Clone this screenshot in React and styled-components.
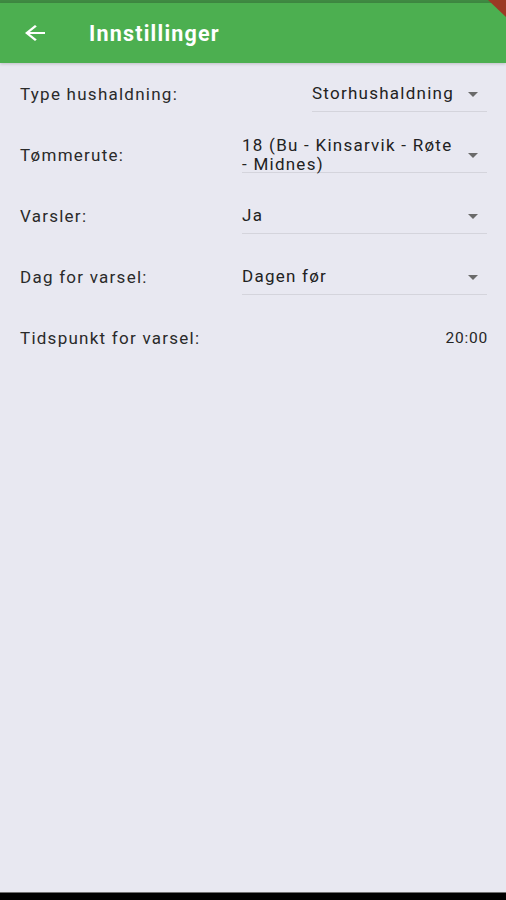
import React, { useState } from 'react';
import styled, { createGlobalStyle } from 'styled-components';

const GlobalStyle = createGlobalStyle`
  html, body {
    margin: 0;
    padding: 0;
    background: #e8e8f1;
  }
  * {
    box-sizing: border-box;
  }
`;

const Screen = styled.div`
  width: 506px;
  height: 900px;
  display: flex;
  flex-direction: column;
  background: #e8e8f1;
  font-family: Roboto, "Noto Sans", sans-serif;
  position: relative;
  overflow: hidden;
`;

const StatusBar = styled.div`
  height: 3px;
  background: #3f8a42;
`;

const AppBar = styled.div`
  height: 60px;
  background: #4caf50;
  display: flex;
  align-items: center;
  padding-left: 20px;
  box-shadow: 0 1px 3px rgba(0, 0, 0, 0.18);
  z-index: 1;
`;

const BackButton = styled.button`
  border: none;
  background: none;
  padding: 0;
  display: flex;
  align-items: center;
  justify-content: center;
  cursor: pointer;
`;

const Title = styled.h1`
  margin: 0 0 0 39px;
  color: #ffffff;
  font-size: 21.5px;
  font-weight: 700;
  letter-spacing: 1.2px;
`;

/* debug banner corner peeking in at the top right */
const DebugCorner = styled.svg`
  position: absolute;
  top: 0;
  right: 0;
  z-index: 2;
`;

const Content = styled.div`
  flex: 1;
  display: flex;
  flex-direction: column;
  padding: 0 19px 0 20px;
`;

const Row = styled.div`
  height: 61px;
  display: flex;
  align-items: center;
  justify-content: space-between;
`;

const Label = styled.span`
  font-size: 17px;
  letter-spacing: 1.25px;
  color: #2a2a2a;
`;

const Dropdown = styled.div`
  width: ${(p) => p.width}px;
  height: 36px;
  display: flex;
  align-items: center;
  justify-content: space-between;
  border-bottom: 1px solid #d4d4dc;
  cursor: pointer;
`;

const Value = styled.span`
  font-size: 17px;
  letter-spacing: 1.25px;
  line-height: 19px;
  color: #222222;
  max-width: 215px;
  margin-top: 1px;
`;

const Caret = styled.span`
  width: 0;
  height: 0;
  border-left: 5px solid transparent;
  border-right: 5px solid transparent;
  border-top: 5px solid #6a6a6a;
  margin-right: 9px;
  margin-top: 2px;
`;

const Time = styled.span`
  font-size: 15.5px;
  letter-spacing: 0.8px;
  color: #262626;
  margin-right: -1px;
`;

const BottomBar = styled.div`
  height: 8px;
  background: #000;
  border-top: 1px solid #707070;
`;

const settings = [
  { label: 'Type hushaldning:', value: 'Storhushaldning', width: 175 },
  { label: 'Tømmerute:', value: '18 (Bu - Kinsarvik - Røte -\u00a0Midnes)', width: 245 },
  { label: 'Varsler:', value: 'Ja', width: 245 },
  { label: 'Dag for varsel:', value: 'Dagen før', width: 245 },
];

export default function App() {
  const [values] = useState(settings);

  return (
    <Screen>
      <GlobalStyle />
      <StatusBar />
      <AppBar>
        <BackButton aria-label="Tilbake">
          <svg width="30" height="24" viewBox="0 0 24 24" preserveAspectRatio="none">
            <path d="M20 11H7.83l5.59-5.59L12 4l-8 8 8 8 1.41-1.41L7.83 13H20v-2z" fill="#fff" />
          </svg>
        </BackButton>
        <Title>Innstillinger</Title>
      </AppBar>
      <DebugCorner width="20" height="20" viewBox="0 0 20 20">
        <polygon points="2,0 20,0 20,17" fill="#9b3a24" />
      </DebugCorner>
      <Content>
        {values.map((s) => (
          <Row key={s.label}>
            <Label>{s.label}</Label>
            <Dropdown width={s.width}>
              <Value>{s.value}</Value>
              <Caret />
            </Dropdown>
          </Row>
        ))}
        <Row>
          <Label>Tidspunkt for varsel:</Label>
          <Time>20:00</Time>
        </Row>
      </Content>
      <BottomBar />
    </Screen>
  );
}
